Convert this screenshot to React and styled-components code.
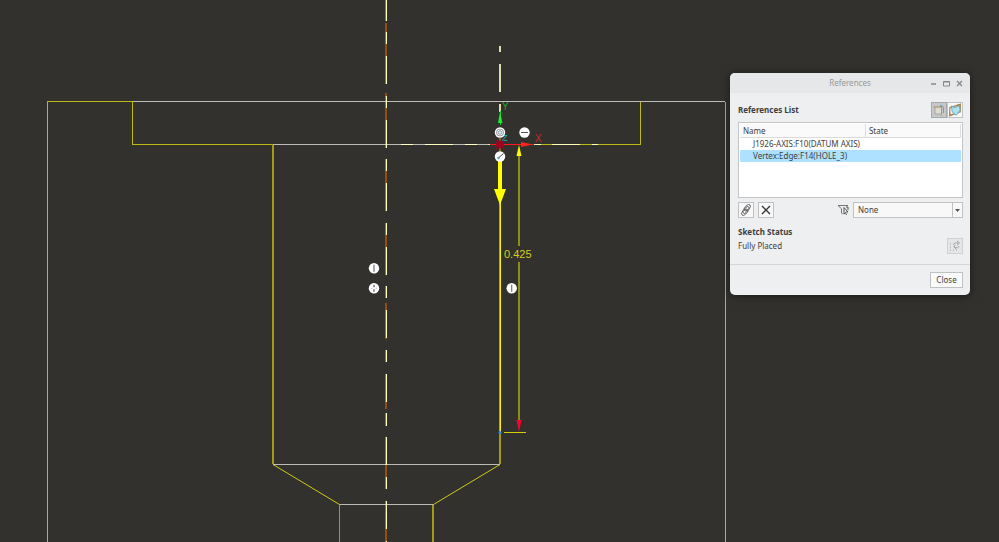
import styled, { createGlobalStyle } from "styled-components";

const GlobalStyle = createGlobalStyle`
  *, *::before, *::after {
    box-sizing: border-box;
  }
  body {
    margin: 0;
    background: #33312d;
    font-family: "Noto Sans", "Open Sans", sans-serif;
  }
`;

const Workspace = styled.main`
  position: relative;
  height: 100vh;
  overflow: hidden;
  background: #33312d;
`;

const Drawing = styled.svg`
  display: block;
  width: 100%;
  height: 100%;
  font-family: "Liberation Sans", Arial, sans-serif;
`;

const Dialog = styled.section`
  position: absolute;
  top: 73px;
  right: 29px;
  width: 240px;
  border-radius: 5px;
  overflow: hidden;
  background: #eeeff1;
  color: #3d3d3d;
  font-size: 8px;
  line-height: 12px;
  box-shadow: 0 1px 8px rgba(0, 0, 0, 0.5);
`;

const TitleBar = styled.header`
  display: grid;
  grid-template-columns: 1fr auto 1fr;
  align-items: center;
  height: 20px;
  padding: 0 4px;
  background: #e6e7e9;
  color: #999;
`;

const Title = styled.h1`
  grid-column: 2;
  margin: 0;
  font-size: 8px;
  font-weight: 400;
`;

const WindowButtons = styled.div`
  display: flex;
  justify-content: flex-end;
`;

const WindowButton = styled.button`
  display: flex;
  align-items: center;
  justify-content: center;
  width: 13px;
  height: 16px;
  padding: 0;
  border: 0;
  background: none;
  color: #888;
`;

const Body = styled.div`
  padding: 9px 7px 10px 8px;
`;

const Row = styled.div`
  display: flex;
  align-items: center;
  justify-content: space-between;
  gap: ${(props) => props.$gap || "0"};
`;

const Heading = styled.h2`
  margin: 0;
  font-size: 8px;
  line-height: 12px;
  font-weight: 700;
`;

const IconButton = styled.button`
  display: flex;
  align-items: center;
  justify-content: center;
  width: 16px;
  height: 16px;
  padding: 0;
  border: 1px solid ${(props) => (props.$pressed ? "#a8a9ab" : "#bfc1c3")};
  background: ${(props) => (props.$pressed ? "#c6c7c9" : "#f8f8f8")};

  &:disabled {
    background: #e4e5e7;
    border-color: #d0d1d3;
  }
`;

const ListBox = styled.div`
  height: 76px;
  margin: 4px 0;
  padding: 1px 1px 0;
  border: 1px solid #c3c5c7;
  background: #fff;
`;

const Table = styled.table`
  width: 100%;
  border-spacing: 0;
  table-layout: fixed;
`;

const HeadCell = styled.th`
  width: ${(props) => props.$width || "auto"};
  height: 14px;
  padding: 1px 3px 0;
  border-bottom: 1px solid #dcdcdc;
  border-right: 1px solid #dcdcdc;
  background: #fafafa;
  font-weight: 400;
  text-align: left;
`;

const ListRow = styled.tr`
  background: ${(props) => (props.$selected ? "#aee1ff" : "#fff")};
`;

const Cell = styled.td`
  height: 12px;
  padding: 0 0 0 13px;
  white-space: nowrap;
`;

const Filter = styled.label`
  display: flex;
  align-items: center;
  gap: 4px;
`;

const SelectFrame = styled.span`
  position: relative;
  display: flex;
  width: 110px;
`;

const Select = styled.select`
  appearance: none;
  width: 100%;
  height: 16px;
  padding: 0 14px 0 4px;
  border: 1px solid #bfc1c3;
  border-radius: 0;
  background: #f8f8f8;
  color: inherit;
  font: inherit;
`;

const SelectArrow = styled.span`
  position: absolute;
  top: 1px;
  right: 1px;
  bottom: 1px;
  display: flex;
  align-items: center;
  justify-content: center;
  width: 10px;
  border-left: 1px solid #bfc1c3;
  pointer-events: none;
`;

const Status = styled.div`
  margin-top: 8px;
`;

const Footer = styled.footer`
  display: flex;
  justify-content: flex-end;
  padding: 7px 7px 7px 8px;
  border-top: 1px solid #d3d5d7;
`;

const CloseButton = styled.button`
  width: 33px;
  height: 16px;
  padding: 0;
  border: 1px solid #bfc1c3;
  background: #fafafa;
  color: inherit;
  font: inherit;
`;

const references = [
  { name: "J1926-AXIS:F10(DATUM AXIS)", selected: false },
  { name: "Vertex:Edge:F14(HOLE_3)", selected: true },
];

// [start, end] of each dash along the main axis
const axisDashes = [
  [0, 21], [23, 84], [93, 148], [159, 211], [223, 275], [286, 298],
  [303, 339], [350, 362], [374, 409], [413, 426], [437, 489], [501, 542],
];
const axisMarks = [
  [23, 32], [44, 56], [93, 96], [108, 120], [171, 183], [235, 247],
  [303, 310], [338, 339], [402, 409], [465, 477], [529, 541],
];
const referenceDashes = [
  [401, 413], [425, 453], [465, 477], [488, 500],
  [533, 541], [552, 580], [592, 598],
];

const Constraint = ({ x, y, children }) => (
  <g transform={`translate(${x} ${y})`}>
    <circle r="5.2" fill="#fff" />
    {children}
  </g>
);

const Sketch = () => (
  <Drawing viewBox="0 0 999 542" role="img" aria-label="Hole section sketch">
    <g fill="none" stroke="#bdb914" shapeRendering="crispEdges">
      <path d="M47.5 542V101.5H132.5V144.5H273" />
      <path d="M725.5 542V101.5" />
      <path d="M640.5 101V144.5H500" />
    </g>
    <g stroke="#a09c14" strokeWidth="2" shapeRendering="crispEdges">
      <path d="M273 144V464M500 432V464M433 504V542" />
      <path d="M339.5 504V542" strokeWidth="1" />
    </g>
    <g fill="none" stroke="#d0cb1a">
      <path d="M273 464.5L339.5 504.5M500 464.5L433.5 504.5" />
    </g>
    <g stroke="#bdbcb6" shapeRendering="crispEdges">
      <path d="M133 101.5H725M273 144.5H500M273 464.5H500M340 504.5H433" />
    </g>

    <g shapeRendering="crispEdges">
      {axisDashes.map(([from, to]) => (
        <g key={from} fill="#ffffc0">
          <rect x="385" y={from} width="1" height={to - from} opacity="0.35" />
          <rect x="386" y={from} width="1" height={to - from} />
        </g>
      ))}
      {axisMarks.map(([from, to]) => (
        <rect key={from} x="385" y={from} width="2" height={to - from} fill="#8f5010" />
      ))}
      {referenceDashes.map(([from, to]) => (
        <rect key={from} x={from} y="144" width={to - from} height="1" fill="#ffffc0" />
      ))}
      <path d="M500 46V52M500 64V92M500 104V112" stroke="#dcdcae" strokeWidth="2" />
    </g>

    <g shapeRendering="crispEdges">
      <path d="M519 155V246M519 262V422" stroke="#918d14" strokeWidth="2" />
      <path d="M504 432.5H526" stroke="#d5d000" />
      <path d="M499.5 200V432" stroke="#b3ab06" />
      <path d="M500.5 200V432" stroke="#fff200" />
      <path d="M500 160V192" stroke="#ffff00" strokeWidth="4" />
    </g>
    <path d="M494 189H506L500 205Z" fill="#ffff00" />
    <path d="M516.5 156L519 145L521.5 156Z" fill="#ffff00" />
    <path d="M516.5 420H521.5L519 432Z" fill="#ff0033" />
    <circle cx="500" cy="432.5" r="1.5" fill="#278de0" />
    <text x="504" y="258" fontSize="11" fill="#d2cd16">0.425</text>

    <path d="M500.5 125V111" stroke="#16d926" />
    <path d="M498 123L500 112L502.5 123Z" fill="#16f32a" />
    <path d="M490 144.5H534" stroke="#ff1a1a" />
    <path d="M521 142L533 144.5L521 147Z" fill="#ff2222" />
    <text x="502" y="110" fontSize="10" fill="#27a52c">Y</text>
    <text x="535" y="142" fontSize="10" fill="#c72929">X</text>
    <text x="502" y="141" fontSize="9" fill="#19b8c4">Z</text>
    <path d="M500 138V162" stroke="#e39a00" />
    <path d="M495.5 139.5L504.5 149.5M504.5 139.5L495.5 149.5" stroke="#b00024" />
    <circle cx="500" cy="144.5" r="4" fill="#9c001f" />

    <Constraint x={500} y={132.5}>
      <circle r="3.5" fill="none" stroke="#666" strokeWidth="0.7" />
      <circle r="1.8" fill="#d7eff5" stroke="#789" strokeWidth="0.8" />
    </Constraint>
    <Constraint x={524.5} y={132.5}>
      <path d="M-3.5 0H3.5" stroke="#555" />
    </Constraint>
    <Constraint x={500} y={156.5}>
      <path d="M-1 1L3.5-3" stroke="#444" />
      <circle cx="-1.5" cy="1.5" r="1.3" fill="#55a9cc" />
    </Constraint>
    <Constraint x={374} y={268.3}>
      <path d="M0-3.5V3.5" stroke="#888" strokeWidth="1.5" />
    </Constraint>
    <Constraint x={374} y={288.3}>
      <path d="M0-3.5V-1M0 1V3.5" stroke="#777" strokeWidth="1.5" />
      <path d="M-3 0H-1.5M1.5 0H3" stroke="#bbb" />
    </Constraint>
    <Constraint x={511.7} y={288.3}>
      <path d="M0-3.5V3.5" stroke="#777" strokeWidth="1.2" />
    </Constraint>
  </Drawing>
);

const SectionIcon = () => (
  <svg width="12" height="12" viewBox="0 0 12 12" fill="none" aria-hidden="true">
    <rect x="2" y="3" width="6.5" height="7" fill="#dcdcd5" stroke="#a39b87" strokeWidth="0.8" />
    <path d="M0.5 3H8.5M8.5 2V11.5" stroke="#b58b54" strokeDasharray="2 1" />
    <path d="M7 1.5Q11 1.5 10.5 5V9" stroke="#5fa5b5" />
  </svg>
);

const PlaneIcon = () => (
  <svg width="14" height="14" viewBox="0 0 12 12" fill="none" aria-hidden="true">
    <path d="M1.5 4L10.5 1.2V7.5L1.5 10.8Z" stroke="#ad8352" />
    <path d="M3 2.5L6 4L9.5 2L10.5 6L7 10.5L3.5 7.5Z" fill="#afe1ef" stroke="#55a8c2" strokeWidth="0.8" />
    <path d="M1.5 8V10.8L5 9.5M8 2L10.5 1.2V4" stroke="#ad8352" />
  </svg>
);

const LinkIcon = () => (
  <svg width="12" height="12" viewBox="0 0 12 12" fill="none" stroke="#555" strokeWidth="0.9" aria-hidden="true">
    <rect x="3.5" y="1.8" width="7.5" height="3.6" rx="1.8" transform="rotate(-45 7.25 3.6)" />
    <rect x="1" y="6.5" width="7.5" height="3.6" rx="1.8" transform="rotate(-45 4.75 8.3)" />
    <rect x="2" y="4.2" width="8" height="3.6" rx="1.8" transform="rotate(-45 6 6)" />
  </svg>
);

const DeleteIcon = () => (
  <svg width="12" height="12" viewBox="0 0 12 12" stroke="#333" strokeWidth="1.3" aria-hidden="true">
    <path d="M2 2L10 10M10 2L2 10" />
  </svg>
);

const FilterIcon = () => (
  <svg width="12" height="12" viewBox="0 0 12 12" fill="none" stroke="#666" strokeWidth="0.9" aria-hidden="true">
    <path d="M6 10.5L4.5 9V4.8L1 1.5H11" />
    <path d="M7 3.5V10L8.5 8.5L9.5 11M7 3.5L11 8H9M9 3H11V6" stroke="#444" />
  </svg>
);

const SolveIcon = () => (
  <svg width="12" height="12" viewBox="0 0 12 12" fill="none" stroke="#a4a5a7" aria-hidden="true">
    <path d="M1 4H4M1 7H4M1 10H10" strokeDasharray="1 2" />
    <path d="M4 5Q5 2 9 3M8 1L10.5 3L8 5M10 6Q9 9 5 7M6 5L5 7L7 9" />
  </svg>
);

const ReferencesDialog = () => (
  <Dialog role="dialog" aria-labelledby="dialog-title">
    <TitleBar>
      <Title id="dialog-title">References</Title>
      <WindowButtons>
        <WindowButton aria-label="Minimize">
          <svg width="7" height="7" stroke="currentColor"><path d="M1 4H6" strokeWidth="1.5" /></svg>
        </WindowButton>
        <WindowButton aria-label="Maximize">
          <svg width="7" height="7" fill="none" stroke="currentColor">
            <path d="M0.5 1.5H6.5V6H0.5ZM0.5 2H6.5" />
          </svg>
        </WindowButton>
        <WindowButton aria-label="Close window">
          <svg width="7" height="7" stroke="currentColor"><path d="M1 1L6 6M6 1L1 6" strokeWidth="1.3" /></svg>
        </WindowButton>
      </WindowButtons>
    </TitleBar>
    <Body>
      <Row>
        <Heading>References List</Heading>
        <Row>
          <IconButton $pressed aria-pressed="true" aria-label="Section references">
            <SectionIcon />
          </IconButton>
          <IconButton aria-label="Plane references">
            <PlaneIcon />
          </IconButton>
        </Row>
      </Row>
      <ListBox>
        <Table>
          <thead>
            <tr>
              <HeadCell $width="57%">Name</HeadCell>
              <HeadCell>State</HeadCell>
            </tr>
          </thead>
          <tbody>
            {references.map((reference) => (
              <ListRow key={reference.name} $selected={reference.selected}>
                <Cell>{reference.name}</Cell>
                <Cell />
              </ListRow>
            ))}
          </tbody>
        </Table>
      </ListBox>
      <Row>
        <Row $gap="4px">
          <IconButton aria-label="Use chain">
            <LinkIcon />
          </IconButton>
          <IconButton aria-label="Delete reference">
            <DeleteIcon />
          </IconButton>
        </Row>
        <Filter htmlFor="filter">
          <FilterIcon />
          <SelectFrame>
            <Select id="filter" aria-label="Filter" defaultValue="None">
              <option>None</option>
            </Select>
            <SelectArrow>
              <svg width="5" height="3" fill="#555"><path d="M0 0H5L2.5 3Z" /></svg>
            </SelectArrow>
          </SelectFrame>
        </Filter>
      </Row>
      <Status>
        <Heading>Sketch Status</Heading>
        <Row>
          <span>Fully Placed</span>
          <IconButton disabled aria-label="Solve">
            <SolveIcon />
          </IconButton>
        </Row>
      </Status>
    </Body>
    <Footer>
      <CloseButton>Close</CloseButton>
    </Footer>
  </Dialog>
);

const App = () => {
  return (
    <>
      <GlobalStyle />
      <Workspace>
        <Sketch />
        <ReferencesDialog />
      </Workspace>
    </>
  );
};

export default App;
